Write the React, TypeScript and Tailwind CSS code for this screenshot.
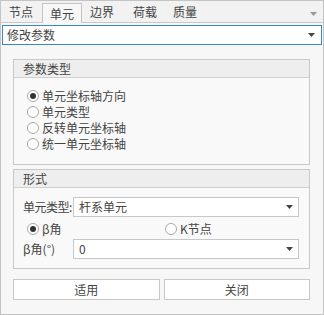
import React from 'react';

const font = { fontFamily: '"Noto Sans CJK SC", "Noto Sans", sans-serif' };

function Arrow() {
  return (
    <svg width="7" height="4" viewBox="0 0 7 4" className="shrink-0">
      <path d="M0 0 L7 0 L3.5 4 Z" fill="#444" />
    </svg>
  );
}

function Radio({ checked, label }: { checked?: boolean; label: string }) {
  return (
    <div className="flex items-center h-[16px] gap-[3px]">
      <span className="w-[12px] h-[12px] rounded-full border border-[#a8a8a8] bg-white flex items-center justify-center">
        {checked && <span className="w-[6px] h-[6px] rounded-full bg-[#333]" />}
      </span>
      <span className="leading-none">{label}</span>
    </div>
  );
}

function Combo({ value, className }: { value: string; className?: string }) {
  return (
    <div
      className={`h-[20px] bg-white border border-[#c8c8c8] flex items-center justify-between pl-[5px] pr-[5px] ${className ?? ''}`}
    >
      <span className="leading-none">{value}</span>
      <Arrow />
    </div>
  );
}

function Group({ title, children }: { title: string; children: React.ReactNode }) {
  return (
    <div className="ml-[12px] w-[297px] border border-[#c8c8c8] bg-[#f9f9f9]">
      <div className="h-[18px] bg-[#eeeeee] border-b border-[#d0d0d0] flex items-center pl-[9px] leading-none">
        {title}
      </div>
      {children}
    </div>
  );
}

export default function App() {
  const tabs = [
    { t: '节点', w: 'w-[40px]' },
    { t: '单元', w: 'w-[40px]' },
    { t: '边界', w: 'w-[40px]' },
    { t: '荷载', w: 'w-[46px]' },
    { t: '质量', w: 'w-[34px]' },
  ];
  return (
    <div
      className="w-[324px] h-[315px] border border-[#c4c4c4] bg-[#f7f7f7] text-[12px] text-[#444] flex flex-col"
      style={font}
    >
      {/* Tabs */}
      <div className="h-[22px] bg-[#f2f2f2] border-b border-[#c8c8c8] flex items-end relative">
        <div className="flex items-end">
          {tabs.map(({ t, w }) =>
            t === '单元' ? (
              <div
                key={t}
                className={`${w} ml-[1px] h-[20px] mb-[-1px] bg-[#f7f7f7] border border-b-0 border-[#c4c4c4] flex items-center justify-center leading-none`}
              >
                {t}
              </div>
            ) : (
              <div key={t} className={`${w} h-[20px] flex items-center justify-center leading-none`}>
                {t}
              </div>
            )
          )}
        </div>
        <div className="absolute right-[6px] top-[11px] opacity-50">
          <Arrow />
        </div>
      </div>

      {/* Command dropdown */}
      <div className="px-[1px] pt-[2px]">
        <div className="h-[20px] bg-white border border-[#3a86c8] flex items-center justify-between pl-[4px] pr-[6px]">
          <span className="leading-none">修改参数</span>
          <Arrow />
        </div>
      </div>

      {/* Group 1 */}
      <div className="mt-[14px]">
        <Group title="参数类型">
          <div className="pl-[13px] pt-[10px] pb-[12px] flex flex-col">
            <Radio checked label="单元坐标轴方向" />
            <Radio label="单元类型" />
            <Radio label="反转单元坐标轴" />
            <Radio label="统一单元坐标轴" />
          </div>
        </Group>
      </div>

      {/* Group 2 */}
      <div className="mt-[4px]">
        <Group title="形式">
          <div className="pt-[9px] pb-[9px] pl-[9px] pr-[10px] flex flex-col">
            <div className="flex items-center">
              <span className="w-[50px] shrink-0 whitespace-nowrap leading-none tracking-[-0.5px]">单元类型:</span>
              <Combo value="杆系单元" className="flex-1" />
            </div>
            <div className="flex items-center h-[21px] pl-[4px] mt-[1px]">
              <div className="w-[138px]">
                <Radio checked label="β角" />
              </div>
              <Radio label="K节点" />
            </div>
            <div className="flex items-center">
              <span className="w-[50px] shrink-0 whitespace-nowrap leading-none">β角(°)</span>
              <Combo value="0" className="flex-1" />
            </div>
          </div>
        </Group>
      </div>

      {/* Buttons */}
      <div className="ml-[12px] w-[297px] mt-[10px] flex gap-[4px]">
        <button className="flex-1 h-[21px] bg-white border border-[#c8c8c8] leading-none">适用</button>
        <button className="flex-1 h-[21px] bg-white border border-[#c8c8c8] leading-none">关闭</button>
      </div>
    </div>
  );
}
